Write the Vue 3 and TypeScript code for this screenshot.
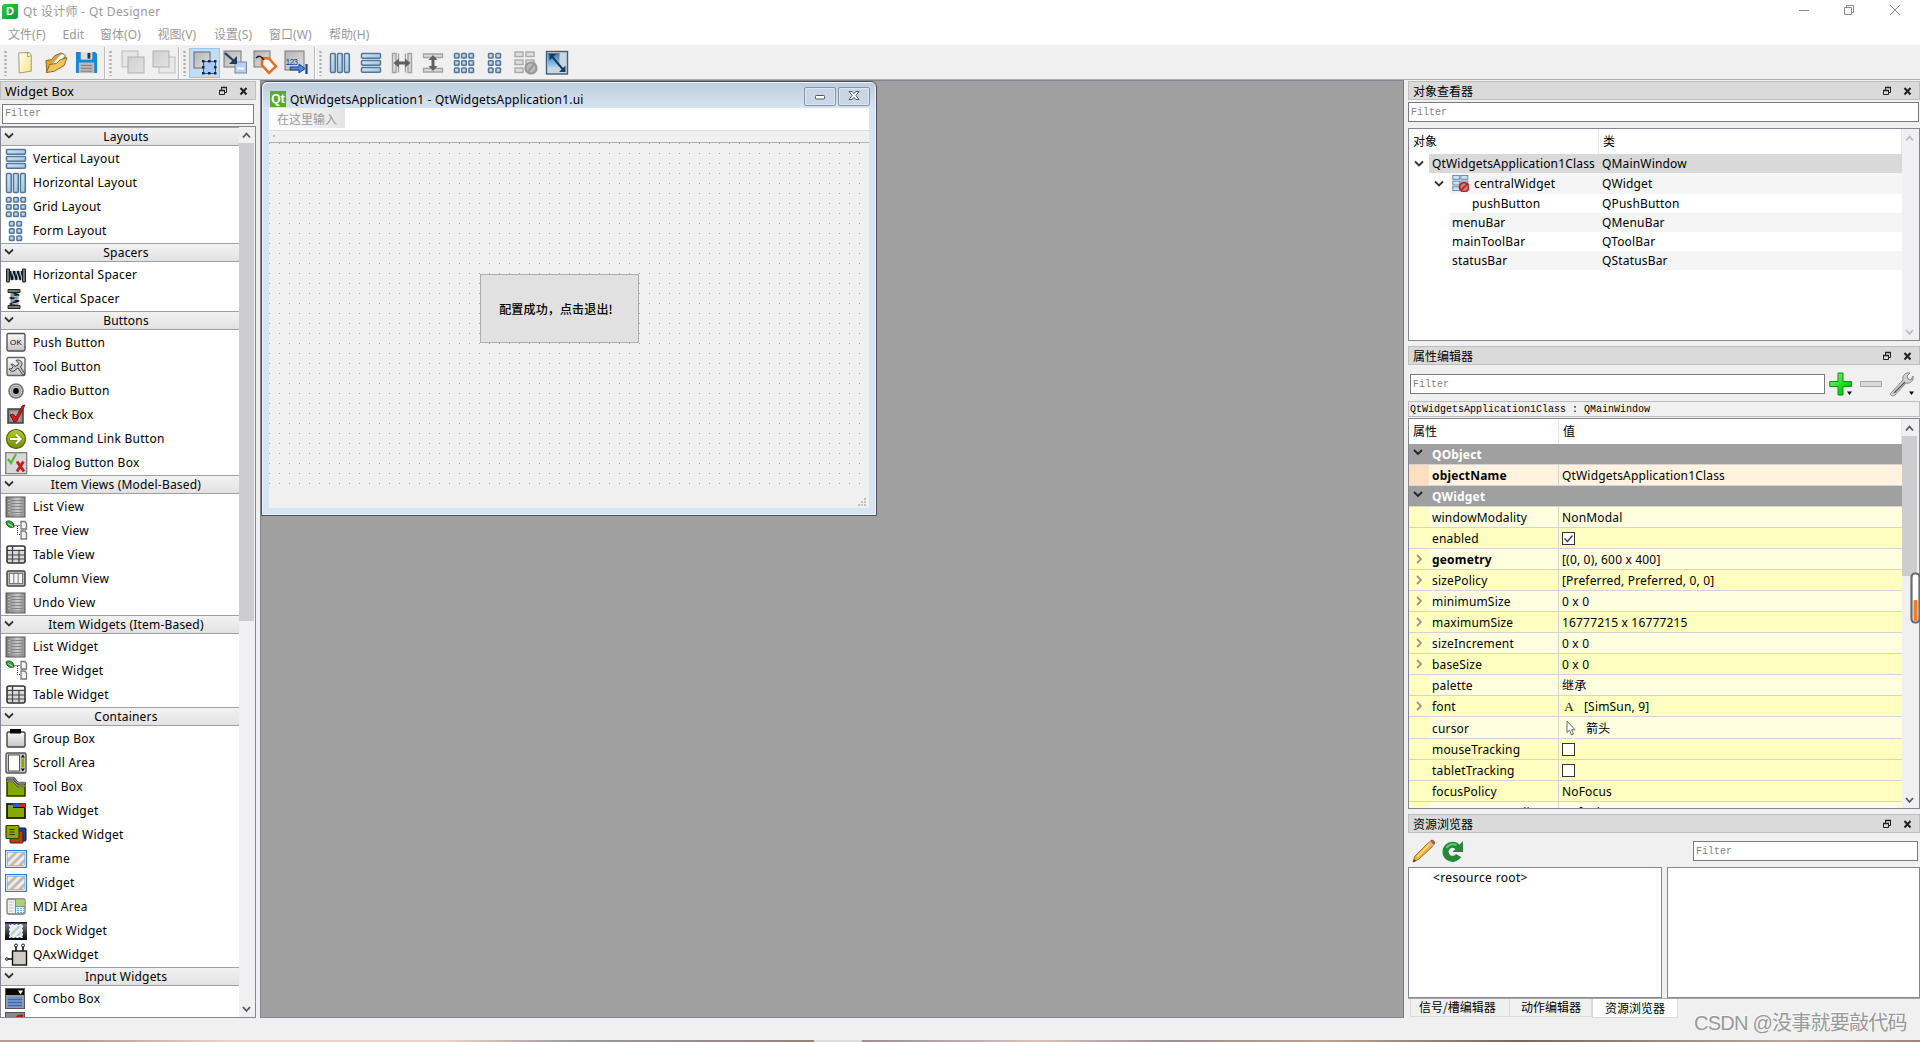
<script setup lang="ts">
interface WidgetGroup {
  title: string
  items: { label: string; icon: string }[]
}
interface PropertyRow {
  name: string
  value?: string
  kind?: 'group' | 'check' | 'font' | 'cursor'
  checked?: boolean
  bold?: boolean
  expandable?: boolean
  tone?: string
}

const cells = (cols: number[], rows: number[]) =>
  rows.map((y) => cols.map((x) => `<rect x="${x}" y="${y}" width="4.600" height="4.600" rx=".8"/>`).join('')).join('')
const blue = (body: string) => `<g fill="url(#gBlue)" stroke="#587490" stroke-width="1.500">${body}</g>`
const grey = (body: string) => `<g fill="#dcdcdc" stroke="#a2a2a2" stroke-width="1.300">${body}</g>`
const list = '<rect x="1" y="1" width="19" height="20" fill="url(#gSteel)" stroke="#555"/><path d="M4 4v15" stroke="#ddd" stroke-dasharray="1 2"/><path d="M6 4.500h12M6 7.500h12M6 10.500h12M6 13.500h12M6 16.500h12M6 19h12" stroke="#858585"/>'
const tree = '<path d="M1 2c2-2 5-1 7 1l1 4c-4 1-7 0-8-5z" fill="#3da53d" stroke="#174f17"/><path d="M3 3.500l5 3" stroke="#b6e8b0"/><path d="M9.500 5.500h6M12.500 6v8.500h3" stroke="#222" fill="none" stroke-dasharray="1 1"/><path d="M16 1.500h4l1.500 2V9H16zM16 11h4l1.500 2v6H16z" fill="#f4f4f4" stroke="#777" stroke-width="1.300"/>'
const table = '<rect x="2" y="2" width="18" height="17" rx="2" fill="#d8d8d8" stroke="#333" stroke-width="1.600"/><path d="M2 6.500h18M2 11h18M2 15h18M7.500 2v17M14 6v13" stroke="#444" stroke-width="1.200"/><path d="M9 4h10M3.500 4H6" stroke="#fff" stroke-width="1.500"/>'
const stripes = '<rect x=".6" y="2.600" width="20.800" height="16.800" fill="#fff" stroke="#3a76c4" stroke-width="1.200"/><rect x="2.500" y="4.500" width="17" height="13" fill="#eeeeec"/><path d="M2.500 11L9 4.500h4L2.500 15zM4 17.500l13-13h2.500v2L8 17.500zM12.500 17.500l7-7v4l-3 3z" fill="#babdb6"/><rect x="2.500" y="4.500" width="17" height="13" fill="none" stroke="#5b8ccc" stroke-width=".5"/>'

const icons: Record<string, string> = {
  vertical: blue('<rect x="1.500" y="1.500" width="19" height="4.800" rx="1"/><rect x="1.500" y="8.500" width="19" height="4.800" rx="1"/><rect x="1.500" y="15.500" width="19" height="4.800" rx="1"/>'),
  horizontal: blue('<rect x="1.500" y="1.500" width="4.800" height="19" rx="1"/><rect x="8.500" y="1.500" width="4.800" height="19" rx="1"/><rect x="15.500" y="1.500" width="4.800" height="19" rx="1"/>'),
  grid: blue(cells([1.5, 8.7, 15.9], [1.5, 8.7, 15.9])),
  form: blue(cells([4.5, 11.9], [1.5, 8.7, 15.9])),
  hspacer: '<path d="M4 7h14v9H4z" fill="#7d97a7"/><path d="M5 7l2 9 2-9 2 9 2-9 2 9 2-9" stroke="#111" stroke-width="1.500" fill="none"/><path d="M7 7l3 9M11 7l3 9M15 7l2 9" stroke="#b9d4df"/><path d="M1.500 5h3v13h-3zM17.500 5h3v13h-3z" fill="#777" stroke="#222"/>',
  vspacer: '<path d="M5.500 3h8v16h-8z" fill="#7d97a7"/><path d="M6 4l7 3-7 3 7 3-7 3 7 3" stroke="#111" stroke-width="1.800" fill="none"/><path d="M7 5l6-1M7 9l6-1M7 12l6-1M7 16l6-1" stroke="#b9d4df"/><path d="M3 1.500h12v3H3zM3 17.500h12v3H3z" fill="#777" stroke="#222"/>',
  push: '<rect x="2" y="1.500" width="18" height="17.500" rx="1.500" fill="url(#gLight)" stroke="#4d4d4d" stroke-width="1.300"/><text x="5" y="12.500" font-family="Liberation Sans, sans-serif" font-size="7.500" textLength="12" lengthAdjust="spacingAndGlyphs" fill="#000">OK</text>',
  tool: '<rect x="2" y="1.500" width="18" height="18" rx="1.500" fill="url(#gLight)" stroke="#666" stroke-width="1.400"/><path d="M11 4.500c3-1.500 6.500.5 6 4-.2 1.200-.8 2-1.500 2.500L20 18l-2 1-5-7-4 3c-2 1-4 0-5-2l3-.5 1-2-2-2.200C8 8 9.500 9 10 10.500l3-1.500.5-2z" fill="#c4c4c4" stroke="#444" stroke-width="1"/>',
  radio: '<circle cx="11" cy="11" r="7" fill="#ddd" stroke="#777" stroke-width="1.700"/><circle cx="11" cy="11" r="5" fill="#bbb" stroke="#999"/><circle cx="11" cy="11" r="2.900" fill="#080808"/>',
  check: '<rect x="3" y="5" width="15" height="14" fill="#888" stroke="#3f3f3f" stroke-width="1.500"/><rect x="5.500" y="7.500" width="10" height="9" fill="#aaa"/><path d="M5 11l3-1 3 3 6-11 3-1-8 16-3 1z" fill="#d3191c" stroke="#6e0708" stroke-width=".8"/>',
  command: '<circle cx="11" cy="11" r="9.500" fill="url(#gOlive)" stroke="#566700" stroke-width="1.200"/><path d="M5 11h10M11 6.500l4.500 4.500-4.500 4.500" stroke="#405000" stroke-width="3.600" fill="none" opacity=".35"/><path d="M5 11h10M11 6.500l4.500 4.500-4.500 4.500" stroke="#fff" stroke-width="2.200" fill="none"/>',
  dialog: '<rect x=".7" y=".7" width="21" height="21" fill="#d8d8d8" stroke="#777" stroke-width="1.200"/><path d="M3 7l3 4 5-9" stroke="#5bb53b" stroke-width="2.300" fill="none"/><path d="M12 9.500l7 10M18.500 9.500l-6.500 10" stroke="#c22020" stroke-width="3"/>',
  list,
  tree,
  table,
  column: '<rect x="2" y="3" width="18" height="15" rx="1.500" fill="#bbb" stroke="#444" stroke-width="1.500"/><rect x="4.500" y="5.500" width="13" height="10" fill="#f6f6f6" stroke="#777"/><path d="M8.800 6v9M13.200 6v9" stroke="#777"/>',
  group: '<rect x="2" y="4" width="18" height="15" rx="1.500" fill="url(#gLight)" stroke="#444" stroke-width="1.400"/><rect x="5" y="1" width="11" height="4.500" fill="#000"/>',
  scroll: '<rect x="1" y="1" width="20" height="20" rx="1.500" fill="#ccc" stroke="#555" stroke-width="1.400"/><rect x="3.500" y="3" width="11" height="16" fill="#fff" stroke="#555"/><path d="M17.800 2.500l2 3h-4zM17.800 19.500l2-3h-4z" fill="#000"/><rect x="16.300" y="6.500" width="3" height="9" fill="#84a800"/>',
  toolbox: '<path d="M2 2h7l4 5h7v13H2z" fill="#87a600" stroke="#283300" stroke-width="1.500"/><path d="M2 2h6l5 5h7M2 5h6l5 5h7" stroke="#555" stroke-width="2.400" fill="none"/><path d="M2 2h6l5 5h7M2 5h6l5 5h7" stroke="#aaa" stroke-width=".9" fill="none"/>',
  tab: '<rect x="2" y="4" width="18" height="14" fill="#86a800" stroke="#111" stroke-width="1.700"/><path d="M8 3.500h6v3.500H8z" fill="#0866d8"/><path d="M14.500 3.500H20v3.500h-5.500z" fill="#df2020"/><path d="M8 7.500h12" stroke="#111"/>',
  stacked: '<rect x="11" y="4" width="10" height="13" rx="1" fill="#1745a5" stroke="#07183a"/><rect x="5" y="7" width="13" height="12" rx="1" fill="#b84010" stroke="#4d1600"/><rect x="1" y="1.500" width="13" height="13" rx="1" fill="#8aaa00" stroke="#334000" stroke-width="1.200"/><path d="M4.500 5.500h5M4.500 8h5M4.500 10.500h5" stroke="#26300a"/>',
  frame: stripes,
  widget: stripes,
  mdi: '<rect x="2" y="3" width="18" height="15" rx="1.500" fill="#f0f0f0" stroke="#777" stroke-width="1.300"/><path d="M11 3.500h8.500V10H11z" fill="#a9d271"/><path d="M10.500 3v15M10.500 10.500H20" stroke="#888"/><path d="M4 6h5M4 9h4M4 12h5M4 15h4" stroke="#c5c5c5"/><path d="M12 12.500h7M12 14.500h7M12 16.500h7" stroke="#7aa5dd" stroke-dasharray="2 1"/>',
  dock: '<rect x="0" y="2" width="22" height="18" fill="url(#gBlack)"/><rect x="4.500" y="4.500" width="13" height="13" fill="#eee" stroke="#fff"/><path d="M6 13l7-7h3L6 16zM11 16l5-5v3l-2 2z" fill="#c5c5c5"/><rect x="4.500" y="4.500" width="13" height="13" fill="none" stroke="#3b6ea5" stroke-dasharray="2 2"/>',
  qax: '<path d="M11 3v5M18 3v5M3 15h5" stroke="#111" stroke-width="1.600"/><circle cx="11" cy="1.500" r="1.500" fill="#fff" stroke="#111"/><circle cx="18" cy="1.500" r="1.500" fill="#fff" stroke="#111"/><circle cx="1.800" cy="15" r="1.300" fill="#fff" stroke="#111"/><rect x="7.500" y="7" width="14" height="14" fill="#d0ccc4" stroke="#111" stroke-width="1.400"/>',
  combo: '<rect x="0.500" y="0.500" width="19" height="20" fill="#999" stroke="#555"/><rect x="1" y="1" width="18" height="6" fill="#080808"/><path d="M13 2.500h5l-2.500 4z" fill="#fff"/><path d="M3 9h14v10H3z" fill="#6a92c8"/><path d="M3 11.500h14M3 14.500h14M3 17.500h14" stroke="#45679c"/>',
  fontcombo: '<rect x="0.500" y="0.500" width="19" height="20" fill="#888" stroke="#555"/><path d="M11 8c1-4 4-5 7-4" stroke="#b31818" stroke-width="2.500" fill="none"/>',

  new: '<path d="M5 1l11-.5 2 3V20L5.500 22z" fill="url(#gPaper)" stroke="#a89854"/><path d="M14 1v4l3.500-1" fill="#fff" stroke="#a89854"/>',
  open: '<path d="M2 21L1 9l6-1 3-4 7-3 4 2v6L8 19z" fill="#dda63b" stroke="#8b6216"/><path d="M5 15L17 2l4 1-4 8z" fill="#fffdf0" stroke="#aaa"/><path d="M1.500 21.500L5 13l7-1 4-4 7-2-3 8-10 6z" fill="#f1c560" stroke="#8b6216"/>',
  save: '<path d="M0 0h20l2 2v20H0z" fill="#1688d8"/><path d="M5 0h12v8H5z" fill="#ddd"/><path d="M12 1h3v6h-3z" fill="#333"/><path d="M3 11h16v11H3z" fill="#bcbcbc"/><path d="M5 14h12M5 17h12M5 20h12" stroke="#777"/>',
  lower: '<rect x="1" y="0" width="16" height="16" fill="#e6e6e6" stroke="#b8b8b8"/><rect x="7" y="6" width="16" height="16" fill="url(#gPale)" stroke="#b0b0b0"/>',
  raise: '<rect x="7" y="6" width="16" height="16" fill="#e9e9e9" stroke="#bdbdbd"/><rect x="1" y="0" width="16" height="16" fill="url(#gPale)" stroke="#b0b0b0"/>',
  editWidgets: '<rect x="1" y="1" width="16" height="16" fill="url(#gMid)" stroke="#666"/><rect x="10.500" y="10.500" width="12" height="12" fill="#aac9f5" stroke="#34567d"/><path d="M9 9h2.500v2.500H9zM15 9h2.500v2.500H15zM21 9h2.500v2.500H21zM9 15h2.500v2.500H9zM21 15h2.500v2.500H21zM9 21h2.500v2.500H9zM15 21h2.500v2.500H15zM21 21h2.500v2.500H21z" fill="#10284d"/>',
  signals: '<rect x="1" y="0" width="17" height="16" fill="url(#gMid)" stroke="#777"/><rect x="12" y="11" width="11.500" height="11" fill="#b8cffa" stroke="#7489aa"/><path d="M14 17.500h7" stroke="#fff" stroke-width="2"/><path d="M2 2l10 9" stroke="#223f5b" stroke-width="2.200"/><path d="M14 5v8H6z" fill="#1c3d5c"/>',
  buddy: '<rect x="1" y="0" width="16" height="16" fill="url(#gMid)" stroke="#777"/><path d="M9 7l7 .5 7 8-7 6.500-7-8z" fill="#fff" stroke="#e86b22" stroke-width="2.500"/><path d="M3 7c3-3 5-2 8 2" stroke="#222" stroke-width="1.500" fill="none"/>',
  tabOrder: '<rect x="1" y="0" width="19" height="19" fill="url(#gMid)" stroke="#777"/><text x="1.500" y="14" font-family="Liberation Sans, sans-serif" font-size="8.500" fill="#123f8a" textLength="12.500">123</text><path d="M6 16h9v-3l6 4.500-6 4.500v-3H6z" fill="#4d86e5" stroke="#1b438d"/><path d="M22.500 13v10" stroke="#1b438d" stroke-width="2.200"/>',
  hsplit: grey('<path d="M1.500 1.500H5v19H1.500zM17 1.500h3.500v19H17zM7.500 1.500v19M14.500 1.500v19" stroke-width="1.400"/>') + '<path d="M2.500 11l5.500-4.500V9.500h6v-3l5.500 4.500-5.500 4.500v-3H8v3z" fill="#606060"/>',
  vsplit: grey('<path d="M1.500 2h19v3.500h-19zM1.500 16.500h19V20h-19z"/>') + '<path d="M11 3L6.500 8h3v6h-3l4.500 5 4.500-5h-3V8h3z" fill="#606060"/>',
  breakGrey: '<g fill="#dedede" stroke="#aaa" stroke-width="1.400"><rect x="0" y="0" width="8" height="4.500"/><rect x="11" y="0" width="8" height="4.500"/><rect x="0" y="8" width="8" height="4.500"/><rect x="11" y="8" width="8" height="4.500"/><rect x="0" y="16" width="8" height="4.500"/></g><circle cx="16" cy="16" r="5.500" fill="#bbb" stroke="#999" stroke-width="2.200"/><path d="M13 19.500l6-7" stroke="#999" stroke-width="2.200"/>',
  breakRed: '<g fill="#c8e3f5" stroke="#6488a8" stroke-width="1.200"><rect x="1" y="0.500" width="8.500" height="4.800"/><rect x="11" y="0.500" width="8.500" height="4.800"/><rect x="1" y="7.500" width="8.500" height="4.800"/><rect x="11" y="7.500" width="8.500" height="4.800"/><rect x="1" y="14.500" width="8.500" height="4.800"/></g><circle cx="15" cy="15" r="5.600" fill="#c98080" stroke="#b52a2a" stroke-width="2.400"/><path d="M11 19l8-8" stroke="#b52a2a" stroke-width="2.400"/>',
  adjust: '<rect x="0.500" y="-.5" width="21" height="22.500" fill="#c9d6de" stroke="#3e5e7c" stroke-width="1.400"/><path d="M1.500 1h12v14h-12z" fill="url(#gAdj)"/><path d="M6 4.500l11 13" stroke="#153a66" stroke-width="2"/><path d="M3.500 2h6.500l-6.500 6.500zM19.500 20H13l6.500-6.500z" fill="#153a66"/>',
  dock_buttons: '<path d="M3.500 4V1.500h5v5H6M1.500 4.500h5v4h-5z" fill="none" stroke="#222"/><path d="M3 1.500h6M1 4.500h6" stroke="#222" stroke-width="1.600"/><path d="M22.500 2l6 6.500M28.500 2l-6 6.500" stroke="#222" stroke-width="2"/>',
}

const menus = [
  { t: '文件(F)', w: 54.5 }, { t: 'Edit', w: 37.5 }, { t: '窗体(O)', w: 57.5 }, { t: '视图(V)', w: 56.5 },
  { t: '设置(S)', w: 55 }, { t: '窗口(W)', w: 60 }, { t: '帮助(H)', w: 50 },
]
const fileTools = ['new', 'open', 'save']
const orderTools = ['lower', 'raise']
const modeTools = ['editWidgets', 'signals', 'buddy', 'tabOrder']
const layoutTools = ['horizontal', 'vertical', 'hsplit', 'vsplit', 'grid', 'form', 'breakGrey', 'adjust']

const make = (title: string, entries: [string, string][]): WidgetGroup => ({
  title,
  items: entries.map(([label, icon]) => ({ label, icon })),
})
const groups: WidgetGroup[] = [
  make('Layouts', [['Vertical Layout', 'vertical'], ['Horizontal Layout', 'horizontal'], ['Grid Layout', 'grid'], ['Form Layout', 'form']]),
  make('Spacers', [['Horizontal Spacer', 'hspacer'], ['Vertical Spacer', 'vspacer']]),
  make('Buttons', [['Push Button', 'push'], ['Tool Button', 'tool'], ['Radio Button', 'radio'], ['Check Box', 'check'], ['Command Link Button', 'command'], ['Dialog Button Box', 'dialog']]),
  make('Item Views (Model-Based)', [['List View', 'list'], ['Tree View', 'tree'], ['Table View', 'table'], ['Column View', 'column'], ['Undo View', 'list']]),
  make('Item Widgets (Item-Based)', [['List Widget', 'list'], ['Tree Widget', 'tree'], ['Table Widget', 'table']]),
  make('Containers', [['Group Box', 'group'], ['Scroll Area', 'scroll'], ['Tool Box', 'toolbox'], ['Tab Widget', 'tab'], ['Stacked Widget', 'stacked'], ['Frame', 'frame'], ['Widget', 'widget'], ['MDI Area', 'mdi'], ['Dock Widget', 'dock'], ['QAxWidget', 'qax']]),
  make('Input Widgets', [['Combo Box', 'combo'], ['', 'fontcombo']]),
]

const objects = [
  { name: 'QtWidgetsApplication1Class', cls: 'QMainWindow', depth: 'd0', open: true },
  { name: 'centralWidget', cls: 'QWidget', depth: 'd1', open: true, icon: true },
  { name: 'pushButton', cls: 'QPushButton', depth: 'd2' },
  { name: 'menuBar', cls: 'QMenuBar', depth: 'd1' },
  { name: 'mainToolBar', cls: 'QToolBar', depth: 'd1' },
  { name: 'statusBar', cls: 'QStatusBar', depth: 'd1' },
]

const properties: PropertyRow[] = [
  { name: 'QObject', kind: 'group' },
  { name: 'objectName', value: 'QtWidgetsApplication1Class', bold: true, tone: 'peach' },
  { name: 'QWidget', kind: 'group' },
  { name: 'windowModality', value: 'NonModal', tone: 'pale' },
  { name: 'enabled', kind: 'check', checked: true },
  { name: 'geometry', value: '[(0, 0), 600 x 400]', bold: true, expandable: true, tone: 'pale' },
  { name: 'sizePolicy', value: '[Preferred, Preferred, 0, 0]', expandable: true },
  { name: 'minimumSize', value: '0 x 0', expandable: true, tone: 'pale' },
  { name: 'maximumSize', value: '16777215 x 16777215', expandable: true },
  { name: 'sizeIncrement', value: '0 x 0', expandable: true, tone: 'pale' },
  { name: 'baseSize', value: '0 x 0', expandable: true },
  { name: 'palette', value: '继承', tone: 'pale' },
  { name: 'font', value: '[SimSun, 9]', kind: 'font', expandable: true },
  { name: 'cursor', value: '箭头', kind: 'cursor', tone: 'pale' },
  { name: 'mouseTracking', kind: 'check' },
  { name: 'tabletTracking', kind: 'check' },
  { name: 'focusPolicy', value: 'NoFocus' },
  { name: 'contextMenuPolicy', value: 'DefaultContextMenu', tone: 'pale' },
]
</script>

<template>
  <div class="app">
    <svg class="defs" width="0" height="0">
      <defs>
        <linearGradient id="gBlue" x1="0" y1="0" x2="1" y2="1"><stop offset="0" stop-color="#d8f0ff" /><stop offset="1" stop-color="#8fc0e4" /></linearGradient>
        <linearGradient id="gSteel" x1="0" y1="0" x2="1" y2="0"><stop offset="0" stop-color="#777" /><stop offset=".6" stop-color="#ccc" /><stop offset="1" stop-color="#8b8b8b" /></linearGradient>
        <linearGradient id="gLight" x1="0" y1="0" x2="0" y2="1"><stop offset="0" stop-color="#fafafa" /><stop offset="1" stop-color="#c4c4c4" /></linearGradient>
        <linearGradient id="gMid" x1="0" y1="0" x2="1" y2="1"><stop offset="0" stop-color="#b4b4b4" /><stop offset="1" stop-color="#e0e0e0" /></linearGradient>
        <linearGradient id="gPale" x1="0" y1="0" x2="1" y2="1"><stop offset="0" stop-color="#cfcfcf" /><stop offset="1" stop-color="#e2e2e2" /></linearGradient>
        <linearGradient id="gOlive" x1="0" y1="0" x2="0" y2="1"><stop offset="0" stop-color="#b5cb35" /><stop offset="1" stop-color="#748c00" /></linearGradient>
        <linearGradient id="gBlack" x1="0" y1="0" x2="0" y2="1"><stop offset="0" stop-color="#000" /><stop offset=".15" stop-color="#777" /><stop offset="1" stop-color="#000" /></linearGradient>
        <linearGradient id="gPaper" x1="0" y1="0" x2="1" y2="1"><stop offset="0" stop-color="#fffef4" /><stop offset="1" stop-color="#f6e48f" /></linearGradient>
        <linearGradient id="gAdj" x1="0" y1="0" x2="0" y2="1"><stop offset="0" stop-color="#3d78b5" /><stop offset="1" stop-color="#9dd2ee" /></linearGradient>
        <linearGradient id="gGreen" x1="0" y1="0" x2="1" y2="1"><stop offset="0" stop-color="#9cf08a" /><stop offset=".6" stop-color="#10dc10" /><stop offset="1" stop-color="#08b008" /></linearGradient>
      </defs>
    </svg>

    <header class="titlebar">
      <span class="applogo">D</span>
      <span class="apptitle">Qt 设计师 - Qt Designer</span>
      <svg class="winctl" width="110" height="20" viewBox="0 0 110 20" fill="none" stroke="#8a8a8a">
        <path d="M4 10.500h10M49.500 7.500h7v7h-7zM51.500 7.500v-2h7v7h-2M95 5l10 10M105 5L95 15" />
      </svg>
    </header>
    <nav class="menubar">
      <span v-for="m in menus" :key="m.t" :style="{ width: m.w + 'px' }">{{ m.t }}</span>
    </nav>
    <div class="toolbar">
      <div class="tb file"><i class="grip" /><svg v-for="i in fileTools" :key="i" width="24" height="24" viewBox="-1 -1 25 25" v-html="icons[i]" /></div>
      <div class="tb order"><i class="grip" /><svg v-for="i in orderTools" :key="i" width="24" height="24" viewBox="0 0 24 24" overflow="visible" v-html="icons[i]" /></div>
      <div class="tb mode"><i class="grip" /><span v-for="i in modeTools" :key="i" class="tool" :class="{ on: i === 'editWidgets' }"><svg width="24" height="24" viewBox="0 0 24 24" overflow="visible" v-html="icons[i]" /></span></div>
      <div class="tb lay"><i class="grip" /><span v-for="i in layoutTools" :key="i" class="ltool"><svg width="22" height="22" viewBox="0 0 22 22" overflow="visible" v-html="icons[i]" /></span></div>
    </div>

    <main class="body">
      <aside class="left">
        <div class="docktitle"><span class="lat">Widget Box</span><svg width="32" height="12" viewBox="0 0 32 12" v-html="icons.dock_buttons" /></div>
        <div class="filter">Filter</div>
        <div class="box wbox">
          <div class="wlist">
            <section v-for="g in groups" :key="g.title">
              <h3><svg width="10" height="8" viewBox="0 0 10 8"><path d="M1 1.500l4 4 4-4" fill="none" stroke="#333" stroke-width="1.800" /></svg>{{ g.title }}</h3>
              <div v-for="w in g.items" :key="w.label" class="witem"><svg width="22" height="22" viewBox="0 0 22 22" overflow="visible" v-html="icons[w.icon]" /><span>{{ w.label }}</span></div>
            </section>
          </div>
          <div class="sbar"><svg width="15" height="16" viewBox="0 0 15 16"><path d="M4 10.500l3.500-4 3.500 4" fill="none" stroke="#555" stroke-width="1.800" /></svg><i class="thumb" /><svg class="down" width="15" height="16" viewBox="0 0 15 16"><path d="M4 6l3.500 4L11 6" fill="none" stroke="#555" stroke-width="1.800" /></svg></div>
        </div>
      </aside>

      <section class="mdi">
        <div class="subwin">
          <div class="subtitle">
            <span class="qt">Qt</span><span class="subname">QtWidgetsApplication1 - QtWidgetsApplication1.ui</span>
            <span class="sbtn"><svg width="12" height="12" viewBox="0 0 12 12"><rect x="1.500" y="5.500" width="9" height="3.500" rx=".8" fill="#fff" stroke="#555" /></svg></span>
            <span class="sbtn"><svg width="12" height="12" viewBox="0 0 12 12"><path d="M1 1.500h3.200L6 3.700l1.800-2.200H11L7.900 5.500 11 9.500H7.800L6 7.300 4.200 9.500H1l3.100-4z" fill="#fff" stroke="#555" /></svg></span>
          </div>
          <div class="form">
            <div class="fmenu"><span>在这里输入</span></div>
            <div class="ftool"><i /></div>
            <div class="canvas"><button class="pushbtn">配置成功，点击退出!</button></div>
            <div class="fstatus"><svg width="8" height="8" viewBox="0 0 8 8"><path d="M6 0h2v2H6zM3 3h2v2H3zM6 3h2v2H6zM0 6h2v2H0zM3 6h2v2H3zM6 6h2v2H6z" fill="#bfbfbf" /></svg></div>
          </div>
        </div>
      </section>

      <aside class="right">
        <div class="docktitle"><span>对象查看器</span><svg width="32" height="12" viewBox="0 0 32 12" v-html="icons.dock_buttons" /></div>
        <div class="filter ofilter">Filter</div>
        <div class="box obox">
          <div class="otable">
            <div class="thead"><span class="c1">对象</span><span>类</span></div>
            <div v-for="(o, n) in objects" :key="o.name" class="orow" :class="[o.depth, { sel: n === 0, tall: o.icon, alt: n % 2 === 1 }]">
              <span class="branch"><svg v-if="o.open" width="10" height="8" viewBox="0 0 10 8"><path d="M1 1.500l4 4 4-4" fill="none" stroke="#333" stroke-width="1.800" /></svg></span>
              <span class="oname"><svg v-if="o.icon" width="17" height="17" viewBox="0 0 21 21" v-html="icons.breakRed" />{{ o.name }}</span>
              <span class="ocls">{{ o.cls }}</span>
            </div>
          </div>
          <div class="sbar"><svg width="15" height="16" viewBox="0 0 15 16"><path d="M4 11.500l3.500-4 3.500 4" fill="none" stroke="#bbb" stroke-width="1.800" /></svg><svg class="down" width="15" height="16" viewBox="0 0 15 16"><path d="M4 6l3.500 4L11 6" fill="none" stroke="#bbb" stroke-width="1.800" /></svg></div>
        </div>

        <div class="docktitle ptitle"><span>属性编辑器</span><svg width="32" height="12" viewBox="0 0 32 12" v-html="icons.dock_buttons" /></div>
        <div class="ptools">
          <div class="filter">Filter</div>
          <svg width="88" height="26" viewBox="0 0 88 26">
            <path d="M9 2h5v8.500h8.500v5H14V24H9v-8.500H.8v-5H9z" fill="url(#gGreen)" stroke="#0b8f14" />
            <path d="M18 20.500h5L20.500 24zM80 20.500h5L82.500 24z" fill="#000" />
            <rect x="31.500" y="10.500" width="21" height="5" fill="#dadada" stroke="#aaa" />
            <path d="M62 22l12-13c-1-4 2-8 7-7l-3 3 1 3 3 1 2-4c1 4-2 8-7 7L66 24c-2 2-6 0-4-2z" fill="#d2d2d2" stroke="#888" />
            <path d="M65 22l11-11" stroke="#555" stroke-width="1.200" />
          </svg>
        </div>
        <div class="plabel">QtWidgetsApplication1Class : QMainWindow</div>
        <div class="box pbox">
          <div class="otable">
            <div class="thead pth"><span class="c1">属性</span><span>值</span></div>
            <div v-for="p in properties" :key="p.name" class="prow" :class="[p.kind, p.tone, { bold: p.bold }]">
              <span class="pind">
                <svg v-if="p.kind === 'group'" width="10" height="8" viewBox="0 0 10 8"><path d="M1 1l4 4 4-4" fill="none" stroke="#222" stroke-width="1.800" /></svg>
                <svg v-else-if="p.expandable" width="8" height="10" viewBox="0 0 8 10"><path d="M2 1l4 4-4 4" fill="none" stroke="#999980" stroke-width="1.800" /></svg>
              </span>
              <span class="pname">{{ p.name }}</span>
              <span v-if="p.kind !== 'group'" class="pval">
                <svg v-if="p.kind === 'check'" width="13" height="13" viewBox="0 0 13 13"><rect x=".5" y=".5" width="12" height="12" fill="#fff" stroke="#333" /><path v-if="p.checked" d="M2.500 6.500l3 3 5-6" fill="none" stroke="#333" stroke-width="1.200" /></svg>
                <b v-if="p.kind === 'font'" class="fa">A</b>
                <svg v-if="p.kind === 'cursor'" class="cur" width="10" height="16" viewBox="0 0 10 16"><path d="M1 1v11.500l2.500-2.300L5.500 15l2-1-2-4.300H9z" fill="#fff" stroke="#666" /></svg>
                {{ p.value }}
              </span>
            </div>
          </div>
          <div class="sbar"><svg width="15" height="16" viewBox="0 0 15 16"><path d="M4 11.500l3.500-4 3.500 4" fill="none" stroke="#555" stroke-width="1.800" /></svg><i class="thumb pthumb" /><svg class="down" width="15" height="16" viewBox="0 0 15 16"><path d="M4 6l3.500 4L11 6" fill="none" stroke="#555" stroke-width="1.800" /></svg></div>
        </div>

        <div class="docktitle rtitle"><span>资源浏览器</span><svg width="32" height="12" viewBox="0 0 32 12" v-html="icons.dock_buttons" /></div>
        <div class="rtools">
          <svg width="54" height="24" viewBox="0 0 54 24">
            <path d="M1 23l2-6L17 3l4 4L7 20z" fill="#efb03b" stroke="#a87420" /><path d="M5 18L18 5" stroke="#ffe29a" stroke-width="1.500" /><path d="M17 3l2-2c2-1 5 2 4 4l-2 2z" fill="#b5573e" /><path d="M18 2l4 4-1.500 1.500-4-4z" fill="#bbb" /><path d="M1 23l1-3 2 2z" fill="#333" />
            <path d="M46.500 16.500a7 7 0 1 1-.5-8" fill="none" stroke="#238a38" stroke-width="6" /><path d="M51 2v11H40.500z" fill="#238a38" /><path d="M34.500 9a7.500 7.500 0 0 1 10-3" fill="none" stroke="#6cc179" stroke-width="2" />
          </svg>
          <div class="filter">Filter</div>
        </div>
        <div class="rpanes"><div class="box rtree">&lt;resource root&gt;</div><div class="box rview" /></div>
        <div class="tabs"><span>信号/槽编辑器</span><span>动作编辑器</span><span class="cur">资源浏览器</span></div>
      </aside>
    </main>
    <footer class="status" />
    <div class="desk"><i /></div>
    <svg class="gadget" width="10" height="52" viewBox="0 0 10 52"><rect x="1.500" y="1.500" width="8" height="49" rx="3.500" fill="#fff" stroke="#6b6b6b" stroke-width="2.200" /><rect x="3.500" y="28" width="4" height="21" rx="1" fill="#ff7a1a" /></svg>
    <div class="mark">CSDN @没事就要敲代码</div>
  </div>
</template>

<style>
body { overflow: hidden; }
</style>
<style scoped>
* { box-sizing: border-box; }
.app { width: 1920px; height: 1042px; position: relative; overflow: hidden; display: flex; flex-direction: column; background: #f0f0f0; color: #000; font: 12px/16px "Noto Sans", "Noto Sans CJK SC", sans-serif; white-space: nowrap; }
.app > * { flex: none; }
svg { display: block; flex: none; }
.defs { position: absolute; }
.titlebar { height: 25px; background: #fff; display: flex; align-items: center; padding-left: 2px; color: #999; }
.applogo { width: 16px; height: 15px; margin: 0 5px 3px 0; border-radius: 3px 0 3px 0; background: linear-gradient(135deg, #2bc54b, #119d39); color: #fff; font: bold 11px/15px "Liberation Sans", sans-serif; text-align: center; }
.apptitle { letter-spacing: .34px; flex: 1; margin-bottom: 1px; }
.winctl { margin: 0 15px 5px 0; }
.menubar { height: 22px; background: #fff; border-bottom: 2px solid #f0f0f0; display: flex; padding-left: 8px; color: #999; line-height: 20px; letter-spacing: .05px; }
.toolbar { height: 33px; border-bottom: 1px solid #b0b0b0; display: flex; }
.tb { display: flex; align-items: center; border-right: 1px solid #bcbcbc; box-shadow: 1px 0 #fff; height: 32px; }
.grip { flex: none; width: 3px; height: 26px; background: radial-gradient(circle, #aaa 1px, transparent 1.300px) 0 0 / 3px 4px; margin-left: 4px; }
.file { width: 105px; }
.file svg { margin-left: 7px; }
.file svg:nth-of-type(1) { margin-left: 6px; }
.order { width: 74px; }
.order .grip { margin-right: 7px; }
.order svg { margin: 0 7px 0 0; position: relative; left: 2px; }
.mode { width: 136px; }
.mode .grip { margin-right: 3px; }
.tool { width: 31px; height: 30px; display: flex; align-items: center; justify-content: center; }
.tool:nth-of-type(n + 2) { margin-right: -.2px; padding-right: 2px; }
.tool.on { background: #c2dcf3; border: 1px solid #90c8f6; }
.lay { border: 0; box-shadow: none; }
.lay .grip { margin-right: 3px; }
.ltool { width: 30.900px; display: flex; justify-content: center; }

.body { height: 938px; display: flex; }
.left { width: 260px; padding: 1px 4px 0 0; }
.docktitle { height: 19px; border: 1px solid #bebebe; background: #dadada; display: flex; align-items: center; justify-content: space-between; padding: 2px 5px 0 4px; line-height: 16px; }
.lat { font-size: 12.500px; letter-spacing: .2px; }
.filter { height: 20px; background: #fff; border: 1px solid #7a7a7a; color: #808080; font: 10px/19px "Liberation Mono", monospace; padding-left: 2px; }
.left .filter { margin: 4px 2px 2px; width: 252px; line-height: 18px; }
.box { border: 1px solid #828790; background: #fff; display: flex; overflow: hidden; }
.wbox { height: 892px; width: 256px; }
.wlist { width: 238px; flex: none; overflow: hidden; }
h3 { margin: 0 0 1px; height: 19px; border: 1px solid #a0a0a0; border-width: 1px 0; background: linear-gradient(#f2f2f2, #e2e2e2); font: 12px/17px "Noto Sans", sans-serif; text-align: center; padding-left: 12px; position: relative; letter-spacing: .2px; }
h3 svg { position: absolute; left: 3px; top: 4px; }
.witem { height: 24px; display: flex; align-items: center; padding-left: 4px; letter-spacing: .25px; }
.witem svg { margin-right: 6px; }
.sbar { width: 17px; flex: none; background: #f0f0f0; display: flex; flex-direction: column; padding-right: 1px; }
.wbox .sbar { width: 16px; }
.down { margin-top: auto; }
.thumb { display: block; height: 478px; width: 15px; background: #cdcdcd; }

.mdi { width: 1144px; background: #a0a0a0; border: 1px solid #828790; border-right-color: #777; }
.subwin { width: 616px; height: 435px; border: 1px solid #4a4f55; border-radius: 6px 6px 0 0; background: linear-gradient(#bfcddb, #d7e4f2 27px); box-shadow: inset 1px 1px #eef4fb, inset -1px -1px #eef4fb; padding: 0 7px; }
.subtitle { height: 26px; display: flex; align-items: center; }
.qt { width: 16px; height: 16px; margin: 8px 4px 0 1px; background: #5caa32; color: #fff; font: bold 12px/16px "Liberation Sans", sans-serif; text-align: center; }
.subname { flex: 1; padding-top: 9px; font-size: 12px; letter-spacing: .22px; }
.sbtn { width: 32px; height: 19px; border: 1px solid #8694ab; border-radius: 2px; background: #c9d6e5; display: flex; align-items: center; justify-content: center; margin: 2px -1px 0 3px; box-shadow: inset 0 0 0 1px #dce7f3; }
.form { width: 600px; height: 400px; background: #f0f0f0; display: flex; flex-direction: column; }
.fmenu { height: 22px; background: #fff; }
.fmenu span { display: block; width: 76px; height: 20px; padding-left: 8px; line-height: 23px; color: #999; background: linear-gradient(90deg, #fff, #e4e4e4); }
.ftool { height: 13px; border-top: 1px solid #ddd; border-bottom: 1px solid #b0b0b0; padding: 4px 0 0 4px; }
.ftool i { display: block; width: 2px; height: 2px; background: #bbb; }
.canvas { height: 345px; background: conic-gradient(from 0deg at 1px 1px, transparent 75%, #a0a0a0 0) 0 0 / 10px 10px; padding: 131px 0 0 211px; }
.pushbtn { width: 159px; height: 69px; border: 1px solid #adadad; background: #e1e1e1; font: 500 12px/16px "Noto Sans CJK SC", sans-serif; letter-spacing: .15px; color: #000; padding: 0 7px 0 0; display: block; }
.fstatus { flex: 1; display: flex; justify-content: flex-end; align-items: flex-end; padding: 0 3px 2px 0; }

.right { width: 516px; padding: 1px 0 0 4px; }
.ofilter { margin-top: 2px; margin-bottom: 6px; width: 511px; }
.obox { height: 213px; }
.otable { width: 493px; overflow: hidden; letter-spacing: .17px; }
.thead { height: 25px; display: flex; line-height: 26px; border-right: 1px solid #e5e5e5; letter-spacing: 0; }
.thead span { padding-left: 4px; }
.thead .c1 { width: 190px; border-right: 1px solid #e5e5e5; }
.orow { display: flex; height: 19px; line-height: 19px; width: 493px; }
.orow.tall { height: 21px; line-height: 21px; }
.branch { width: 20px; display: flex; align-items: center; justify-content: center; padding-right: 1px; }
.d1 .branch { width: 40px; padding-left: 20px; }
.d2 .branch { width: 60px; }
.oname { width: 170px; padding-left: 3px; display: flex; align-items: center; }
.oname svg { margin-right: 5px; }
.d1 .oname { width: 150px; }
.d2 .oname { width: 130px; }
.ocls { flex: 1; padding-left: 3px; }
.sel .oname, .sel .ocls { background: #d9d9d9; }
.alt .oname, .alt .ocls { background: #f5f5f5; }
.ptitle { margin-top: 5px; }
.ptools { display: flex; height: 36px; align-items: center; padding-left: 2px; }
.ptools .filter { width: 415px; margin: 2px 4px 0 0; }
.ptools svg { margin-top: 2px; }
.plabel { height: 16px; border: 1px solid #bebebe; font: 10px/16px "Liberation Mono", monospace; padding-left: 1px; margin-bottom: 1px; color: #000; }
.pbox { height: 391px; }
.pth .c1 { width: 150px; }
.prow { height: 21px; display: flex; line-height: 20px; border-bottom: 1px solid #d4d4d4; background: #ffffbf; width: 493px; }
.prow.cursor { height: 22px; line-height: 21px; }
.prow.pale { background: #ffffdf; }
.prow.peach { background: #fff2df; }
.pind { width: 20px; background: #ffffbf; display: flex; align-items: center; justify-content: center; padding-right: 1px; }
.peach .pind { background: #ffdfbf; }
.prow.group { background: #a0a0a0; color: #fff; font-weight: bold; }
.group .pind { background: transparent; padding: 0 3px 3px 0; }
.pname { width: 130px; padding: 1px 0 0 3px; border-right: 1px solid #d4d4d4; }
.group .pname { border: 0; }
.bold .pname { font-weight: bold; }
.pval { padding: 1px 0 0 3px; display: flex; align-items: center; }
.pval svg { margin-top: -1px; }
.fa { width: 14px; text-align: center; font: 13px/20px "Liberation Serif", serif; margin: 0 8px 0 0; }
.pval .cur { margin: 0 10px 0 4px; }
.pthumb { height: 140px; margin-top: 1px; }
.rtitle { margin-top: 5px; }
.rtools { display: flex; justify-content: space-between; align-items: center; height: 34px; padding: 2px 2px 0 4px; }
.rtools .filter { width: 225px; }
.rpanes { display: flex; gap: 5px; height: 131px; }
.rtree { width: 254px; padding: 2px 0 0 24px; letter-spacing: .35px; }
.rview { flex: 1; }
.tabs { border-top: 1px solid #a8a8a8; display: flex; align-items: flex-start; padding-left: 2px; height: 20px; font-family: "Noto Sans CJK SC", sans-serif; line-height: 16px; }
.tabs span { width: 100px; height: 18px; border: 1px solid #d9d9d9; border-top: 0; padding-left: 8px; }
.tabs span:nth-child(2) { width: 82px; padding-left: 11px; border-left: 0; }
.tabs .cur { width: 86px; margin: 0; height: 19px; background: #fff; padding-left: 12px; line-height: 17px; }
.status { height: 22px; }
.desk { height: 2px; padding-left: 814px; background: linear-gradient(90deg, #b69b8e 4%, #f1d2c1 12% 23%, #9c98a0 30%, #97827b 42%, #aa9fa6 48%, #dfbfba 54%, #9a9093 61%, #c0a08a 69%, #75695f 79%, #bea493 93%, #a48374); }
.desk i { display: block; width: 48px; height: 2px; background: #ddd; }
.gadget { position: absolute; right: 0; top: 572px; }
.mark { position: absolute; left: 1694px; top: 1009px; font: 20px/28px "Liberation Sans", "Noto Sans CJK SC", sans-serif; letter-spacing: -.75px; color: #999; text-shadow: -1px -1px #fafafa; }
</style>
